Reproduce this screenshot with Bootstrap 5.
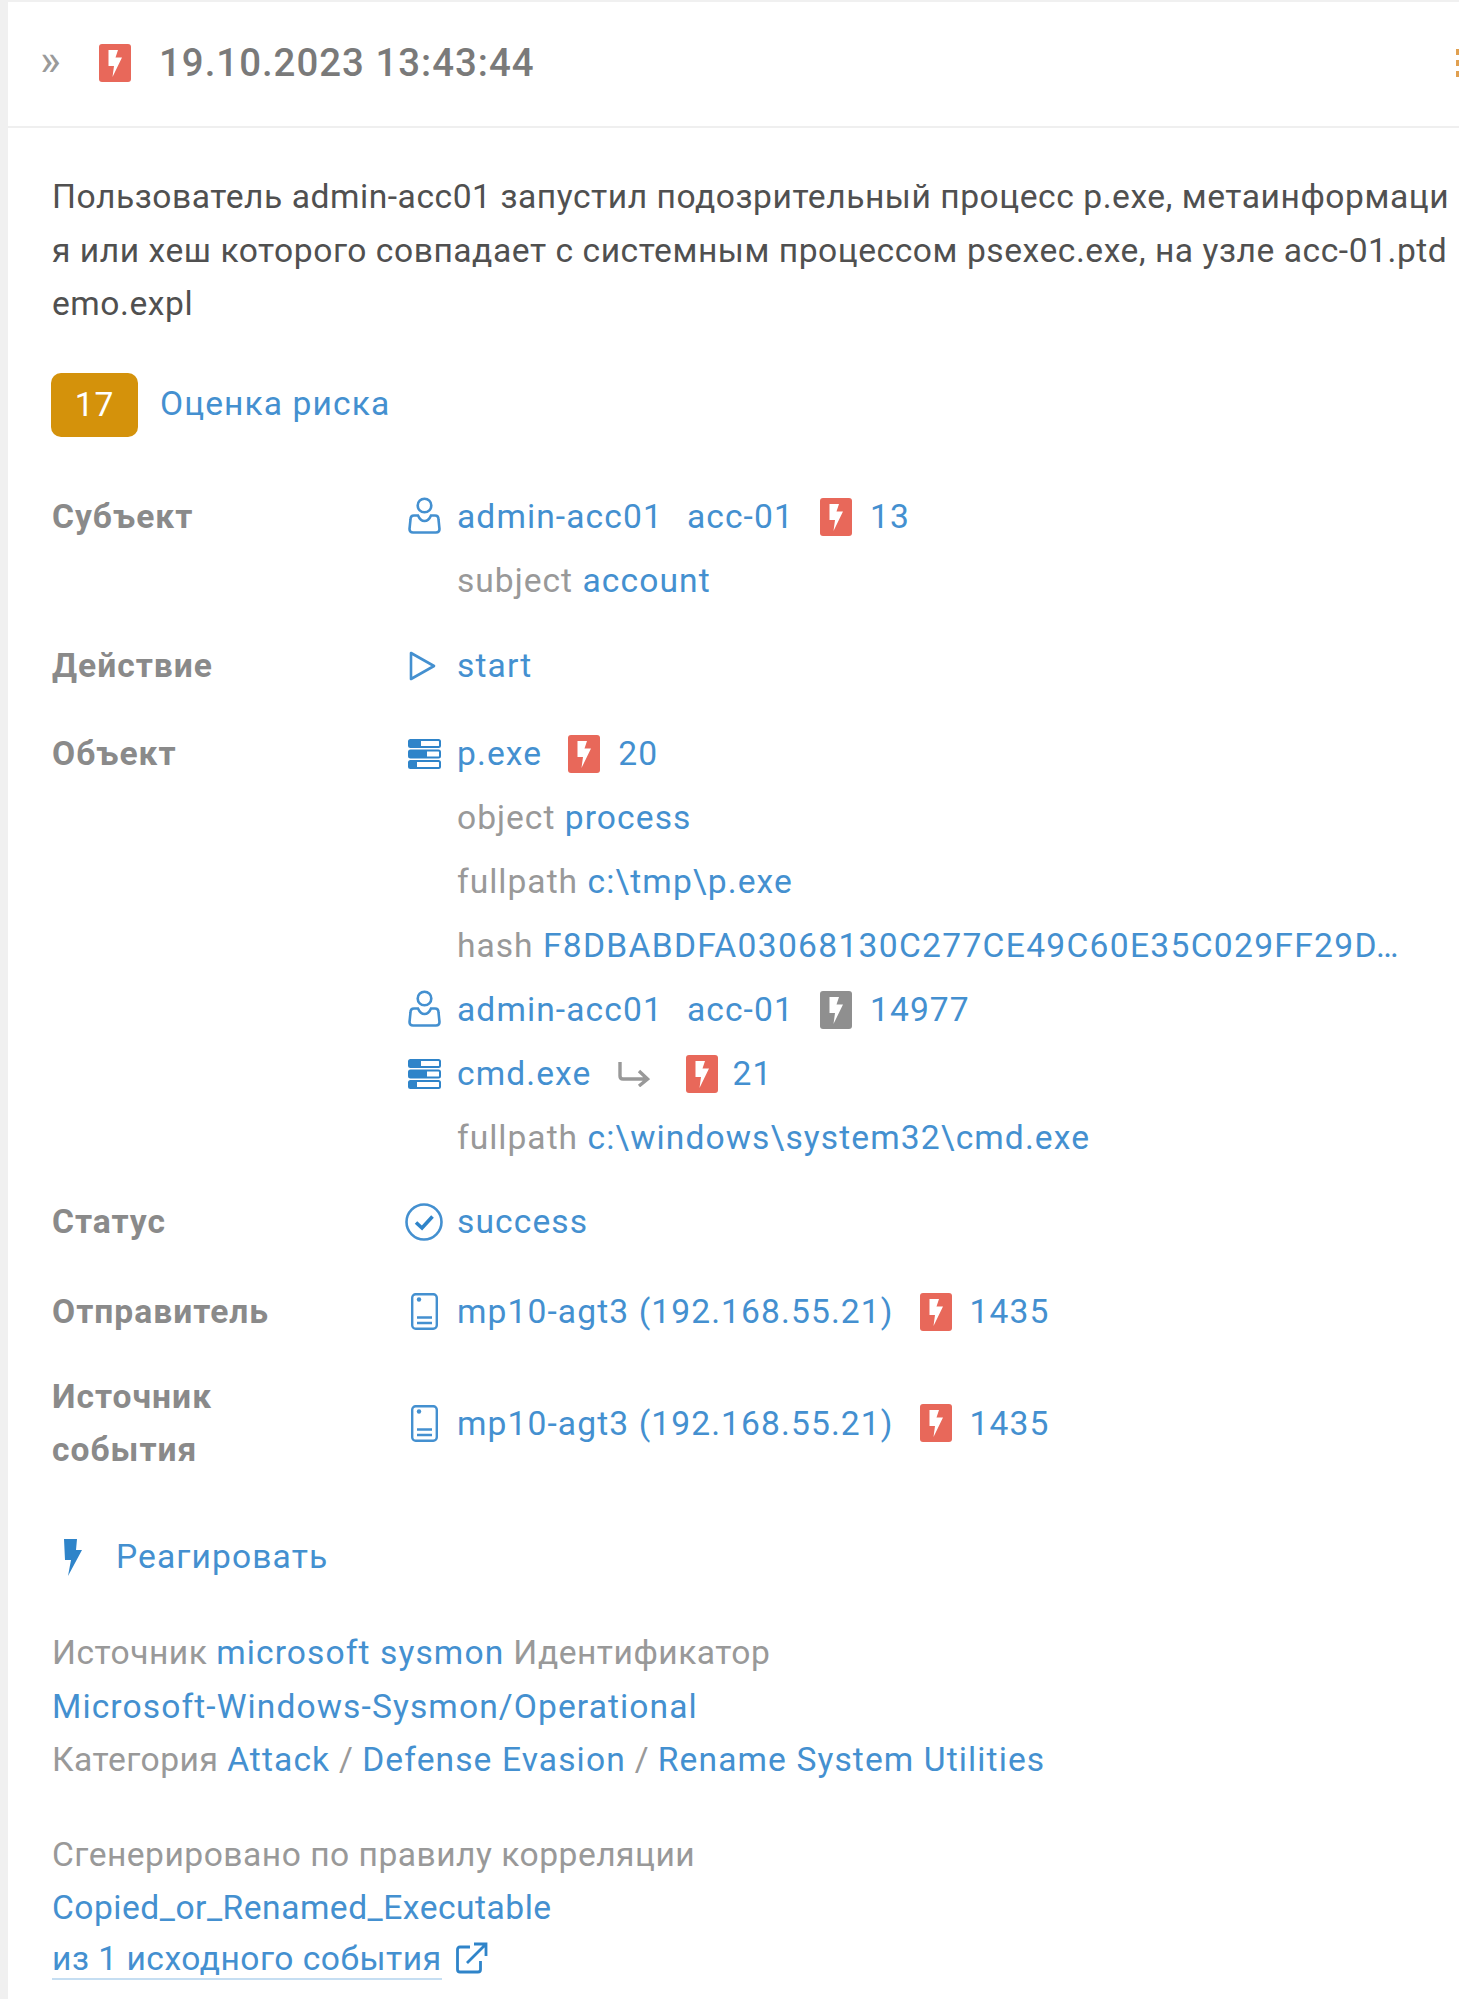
<!doctype html>
<html lang="ru"><head><meta charset="utf-8">
<link rel="stylesheet" href="https://cdn.jsdelivr.net/npm/bootstrap@5.3.0/dist/css/bootstrap.min.css">
<style>
html,body{background:#fff;}
body{font-family:Roboto,"Liberation Sans",sans-serif;font-size:33.6px;line-height:53.5px;letter-spacing:1px;color:#505050;overflow:hidden;}
a{color:#4490d0;text-decoration:none;letter-spacing:1.1px;}
.pane{margin-left:8px;border-top:2px solid #f0f0f0;min-height:1999px;position:relative;}
.strip{position:fixed;left:0;top:0;bottom:0;width:8px;background:#f0f0f0;}
.head{height:126px;border-bottom:2px solid #efefef;padding-left:32px;padding-bottom:2px;overflow:hidden;}
.chev{color:#9a9a9a;font-size:44px;width:59px;line-height:1;margin-top:-6px;letter-spacing:0;}
.stamp{color:#7a7a7a;font-weight:500;font-size:38.4px;margin-left:28px;}
.dots{margin-left:auto;flex:none;}
.main{padding:42px 0 0 44px;}
.para{width:1402px;word-break:break-all;margin:0 0 42px;letter-spacing:.55px;}
.riskb{width:87px;height:64px;border-radius:10px;background:#d4920b;color:#fff;margin-left:-1px;}
.risklink{margin-left:22px;margin-top:-2px;}
.sect{margin-top:48px;}
.rowx{margin-bottom:24px;}
.rowx.tight{margin-bottom:20px;}
.rowx.mid{margin-bottom:21px;}
.rowx.wide{margin-bottom:26px;}
.lbl{width:353px;padding-right:70px;flex:none;font-weight:700;color:#8a8a8a;line-height:53.76px;}
.lbl1{line-height:64px;}
.vl{height:64px;white-space:nowrap;}
.ic{width:52px;flex:none;display:flex;align-items:center;}
.ic-n{padding-left:3px;}
.ic-u{padding-left:3px;padding-bottom:3px;}
.ic-d{padding-left:6px;}
.mut{color:#999;}
.gp{margin-left:24px;}
.gb{margin-left:26px;}
.ga{margin-left:27px;}
.gb2{margin-left:36px;}
.num{margin-left:18px;}
.num2{margin-left:14px;}
.hashv{letter-spacing:1.3px;}
.bolt{flex:none;display:block;}
.react{height:64px;margin-top:48px;}
.react svg{margin-left:10px;margin-right:34px;}
.meta{margin-top:37px;margin-bottom:41px;}
.meta .mut{letter-spacing:.5px;}
.rule,.rule a{letter-spacing:.5px;}
.lastln{margin-top:-3px;}
.ul{border-bottom:2px solid #c5def2;}
.ext{margin-left:14px;vertical-align:-4px;}
</style></head><body>
<svg width="0" height="0" class="position-absolute"><defs>
<symbol id="i-bolt" viewBox="0 0 32 38"><rect width="32" height="38" rx="3" fill="currentColor"/><path d="M9.500 6H19L16.500 13.500H23L13.500 33L15 22H9.500Z" fill="#fff"/></symbol>
<symbol id="i-user" viewBox="0 0 33 37"><g fill="none" stroke="currentColor" stroke-width="2.600"><circle cx="16.500" cy="8.500" r="6.800"/><path d="M6 18.500H10C11.500 22 13.500 24 16.500 24S21.500 22 23 18.500H27Q30.500 18.500 30.500 22.500L31.500 32Q31.500 35.500 28 35.500H5Q1.500 35.500 1.500 32L2.500 22.500Q2.500 18.500 6 18.500Z"/></g></symbol>
<symbol id="i-proc" viewBox="0 0 33 30"><g fill="none" stroke="currentColor" stroke-width="2"><rect x="1" y="1" width="31" height="7" rx="1.500"/><rect x="1" y="11.500" width="31" height="7" rx="1.500"/><rect x="1" y="22" width="31" height="7" rx="1.500"/></g><g fill="currentColor"><rect x="1" y="1" width="12" height="7"/><rect x="1" y="11.500" width="18" height="7"/><rect x="1" y="22" width="8" height="7"/></g></symbol>
<symbol id="i-dev" viewBox="0 0 27 37"><g fill="none" stroke="currentColor" stroke-width="2.400"><rect x="1.200" y="1.200" width="24.600" height="34.600" rx="3.500"/><path d="M6 24.500H21M6 30H21"/></g><circle cx="8" cy="6.500" r="2.200" fill="currentColor"/></symbol>
</defs></svg>
<div class="strip"></div>
<div class="pane">
  <div class="head d-flex align-items-center">
    <span class="chev">»</span>
    <svg class="bolt" width="32" height="38" style="color:#e8685a"><use href="#i-bolt"/></svg>
    <span class="stamp">19.10.2023 13:43:44</span>
    <svg class="dots" width="3" height="28" viewBox="0 0 3 28"><g fill="#e0a050"><rect y="0" width="3" height="6"/><rect y="11" width="3" height="6"/><rect y="22" width="3" height="6"/></g></svg>
  </div>
  <div class="main">
    <p class="para">Пользователь admin-acc01 запустил подозрительный процесс p.exe, метаинформация или хеш которого совпадает с системным процессом psexec.exe, на узле acc-01.ptdemo.expl</p>
    <div class="d-flex align-items-center">
      <span class="riskb d-flex align-items-center justify-content-center">17</span>
      <a href="#" class="risklink">Оценка риска</a>
    </div>
    <div class="sect">
      <div class="d-flex rowx mid"><div class="lbl lbl1">Субъект</div><div>
        <div class="vl d-flex align-items-center"><span class="ic ic-u"><svg width="33" height="37" style="color:#4490d0"><use href="#i-user"/></svg></span><a href="#">admin-acc01</a><a href="#" class="gp">acc-01</a>
          <svg class="bolt gb" width="32" height="38" style="color:#e8685a"><use href="#i-bolt"/></svg><a href="#" class="num">13</a></div>
        <div class="vl d-flex align-items-center"><span class="ic"></span><span class="mut">subject&nbsp;</span><a href="#">account</a></div>
      </div></div>
      <div class="d-flex rowx"><div class="lbl lbl1">Действие</div><div>
        <div class="vl d-flex align-items-center"><span class="ic"><svg width="33" height="30" viewBox="0 0 33 30" fill="none" stroke="#4490d0" stroke-width="2.600" stroke-linejoin="round"><path d="M6 2L29 15L6 28Z"/></svg></span><a href="#">start</a></div>
      </div></div>
      <div class="d-flex rowx tight"><div class="lbl lbl1">Объект</div><div>
        <div class="vl d-flex align-items-center"><span class="ic ic-n"><svg width="33" height="30" style="color:#2f84c9"><use href="#i-proc"/></svg></span><a href="#">p.exe</a>
          <svg class="bolt gb" width="32" height="38" style="color:#e8685a"><use href="#i-bolt"/></svg><a href="#" class="num">20</a></div>
        <div class="vl d-flex align-items-center"><span class="ic"></span><span class="mut">object&nbsp;</span><a href="#">process</a></div>
        <div class="vl d-flex align-items-center"><span class="ic"></span><span class="mut">fullpath&nbsp;</span><a href="#">c:\tmp\p.exe</a></div>
        <div class="vl d-flex align-items-center"><span class="ic"></span><span class="mut">hash&nbsp;</span><a href="#" class="hashv">F8DBABDFA03068130C277CE49C60E35C029FF29D…</a></div>
        <div class="vl d-flex align-items-center"><span class="ic ic-u"><svg width="33" height="37" style="color:#4490d0"><use href="#i-user"/></svg></span><a href="#">admin-acc01</a><a href="#" class="gp">acc-01</a>
          <svg class="bolt gb" width="32" height="38" style="color:#8f8f8f"><use href="#i-bolt"/></svg><a href="#" class="num">14977</a></div>
        <div class="vl d-flex align-items-center"><span class="ic ic-n"><svg width="33" height="30" style="color:#2f84c9"><use href="#i-proc"/></svg></span><a href="#">cmd.exe</a>
          <svg class="ga" width="32" height="26" viewBox="0 0 32 26" fill="none" stroke="#999" stroke-width="3.400"><path d="M2 1V15Q2 18 5 18H29M21 10L29.500 18L21 25"/></svg>
          <svg class="bolt gb2" width="32" height="38" style="color:#e8685a"><use href="#i-bolt"/></svg><a href="#" class="num2">21</a></div>
        <div class="vl d-flex align-items-center"><span class="ic"></span><span class="mut">fullpath&nbsp;</span><a href="#">c:\windows\system32\cmd.exe</a></div>
      </div></div>
      <div class="d-flex rowx wide"><div class="lbl lbl1">Статус</div><div>
        <div class="vl d-flex align-items-center"><span class="ic"><svg width="38" height="38" viewBox="0 0 38 38" fill="none" stroke="#4490d0"><circle cx="19" cy="19" r="17.500" stroke-width="2.600"/><path d="M11 19.500L17 25L27.500 13.500" stroke-width="3.600" stroke="#2f84c9"/></svg></span><a href="#">success</a></div>
      </div></div>
      <div class="d-flex rowx wide"><div class="lbl lbl1">Отправитель</div><div>
        <div class="vl d-flex align-items-center"><span class="ic ic-d"><svg width="27" height="37" style="color:#4490d0"><use href="#i-dev"/></svg></span><a href="#">mp10-agt3 (192.168.55.21)</a>
          <svg class="bolt gb" width="32" height="38" style="color:#e8685a"><use href="#i-bolt"/></svg><a href="#" class="num">1435</a></div>
      </div></div>
      <div class="d-flex align-items-center"><div class="lbl">Источник события</div><div>
        <div class="vl d-flex align-items-center"><span class="ic ic-d"><svg width="27" height="37" style="color:#4490d0"><use href="#i-dev"/></svg></span><a href="#">mp10-agt3 (192.168.55.21)</a>
          <svg class="bolt gb" width="32" height="38" style="color:#e8685a"><use href="#i-bolt"/></svg><a href="#" class="num">1435</a></div>
      </div></div>
    </div>
    <div class="react d-flex align-items-center">
      <svg width="20" height="37" viewBox="0 0 20 37"><path d="M2 0H15L14 11H20L6 37L9 21H3Z" fill="#2f84c9"/></svg><a href="#">Реагировать</a>
    </div>
    <div class="meta">
      <div><span class="mut">Источник </span><a href="#">microsoft sysmon</a><span class="mut"> Идентификатор</span></div>
      <div><a href="#">Microsoft-Windows-Sysmon/Operational</a></div>
      <div><span class="mut">Категория </span><a href="#">Attack</a><span class="mut"> / </span><a href="#">Defense Evasion</a><span class="mut"> / </span><a href="#">Rename System Utilities</a></div>
    </div>
    <div class="rule">
      <div class="mut">Сгенерировано по правилу корреляции</div>
      <div><a href="#">Copied_or_Renamed_Executable</a></div>
      <div class="lastln"><a href="#" class="ul">из 1 исходного события</a><svg class="ext" width="32" height="32" viewBox="0 0 32 32" fill="none" stroke="#2f84c9" stroke-width="2.800"><path d="M14 5H4Q1.500 5 1.500 7.500V27.500Q1.500 30 4 30H22Q24.500 30 24.500 27.500V19M11 21L29 3M18 2H30V14"/></svg></div>
    </div>
  </div>
</div>
</body></html>
